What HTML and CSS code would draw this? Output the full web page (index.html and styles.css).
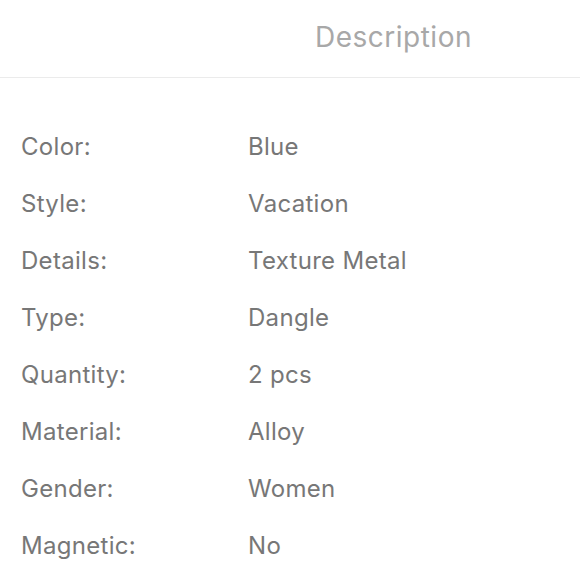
FILE: index.html
```html
<!DOCTYPE html>
<html>
<head>
<meta charset="utf-8">
<link rel="stylesheet" href="styles.css">
</head>
<body>
<div class="header"><span class="title">Description</span></div>
<div class="specs">
  <div class="row"><span class="label">Color:</span><span class="value">Blue</span></div>
  <div class="row"><span class="label">Style:</span><span class="value">Vacation</span></div>
  <div class="row"><span class="label">Details:</span><span class="value">Texture Metal</span></div>
  <div class="row"><span class="label">Type:</span><span class="value">Dangle</span></div>
  <div class="row"><span class="label">Quantity:</span><span class="value">2 pcs</span></div>
  <div class="row"><span class="label">Material:</span><span class="value">Alloy</span></div>
  <div class="row"><span class="label">Gender:</span><span class="value">Women</span></div>
  <div class="row"><span class="label">Magnetic:</span><span class="value">No</span></div>
</div>
</body>
</html>
```
FILE: styles.css
```css
html, body {
  margin: 0;
  padding: 0;
  background: #fff;
  font-family: Inter, "Liberation Sans", Arial, sans-serif;
}
.header {
  height: 73px;
  padding-bottom: 4px;
  border-bottom: 1px solid #ebebeb;
  display: flex;
  align-items: center;
  padding-left: 315px;
}
.title {
  font-size: 28px;
  letter-spacing: 0.5px;
  color: #a8a8a8;
  line-height: 1;
}
.specs {
  padding-top: 40px;
}
.row {
  display: flex;
  height: 57px;
  align-items: center;
  font-size: 24px;
  letter-spacing: 0.3px;
  color: #777777;
}
.label {
  width: 227px;
  padding-left: 21px;
}
.value {
  color: #777777;
}
```
